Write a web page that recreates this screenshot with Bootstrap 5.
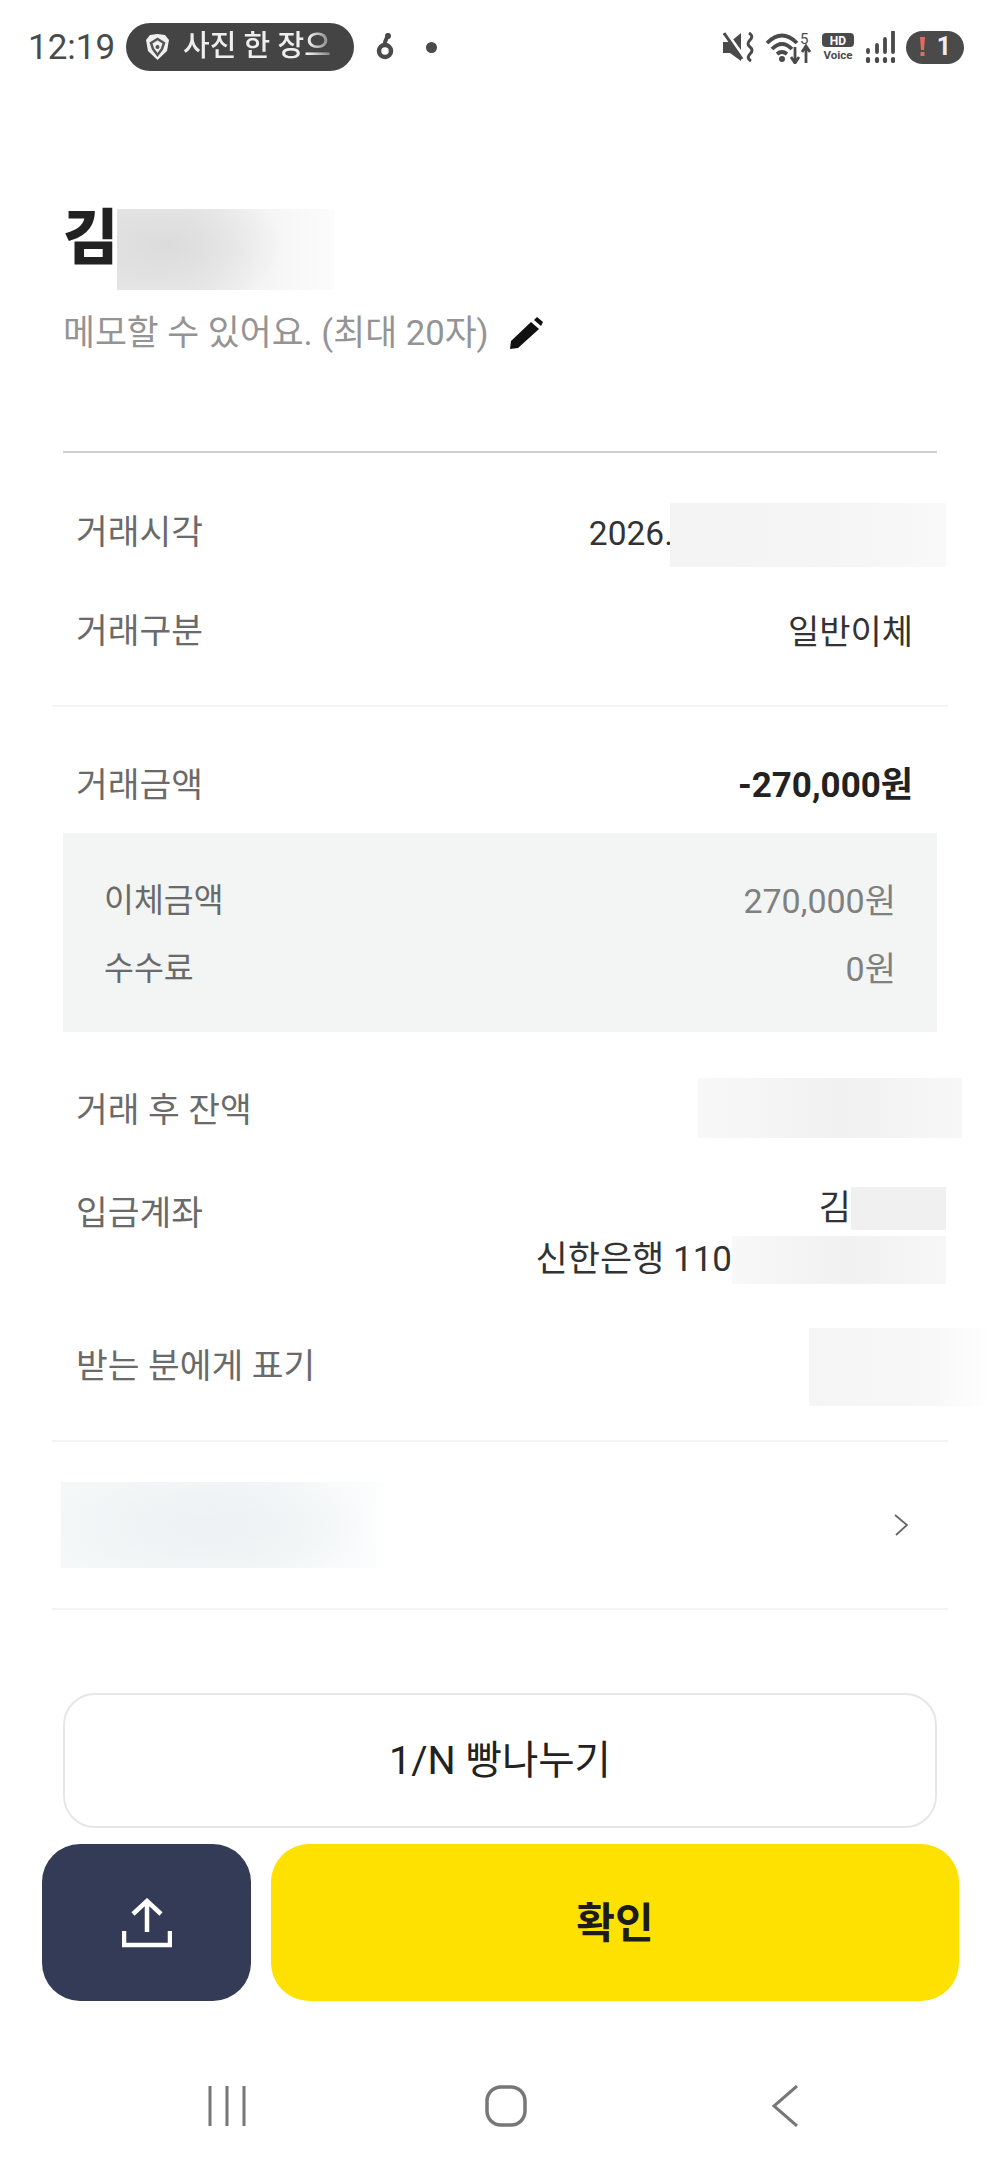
<!DOCTYPE html>
<html lang="ko"><head><meta charset="utf-8"><title>거래 상세</title>
<link href="https://cdn.jsdelivr.net/npm/bootstrap@5.3.0/dist/css/bootstrap.min.css" rel="stylesheet">
<style>
html,body{height:2168px;overflow:hidden;background:#fff}
body{font-family:Roboto,"Noto Sans CJK KR",sans-serif;color:#222;letter-spacing:0}
.sbar{height:94px;padding-left:28px;padding-right:36px;color:#4a4a4a}
.clock{font-size:35px;width:98px;line-height:1}
.pill{width:228px;height:48px;border-radius:24px;background:#444;color:#eee;font-size:29px;font-weight:500;padding-left:19px;gap:13px;overflow:hidden;white-space:nowrap}
.pill-txt{-webkit-mask-image:linear-gradient(90deg,#000 85%,rgba(0,0,0,.35));mask-image:linear-gradient(90deg,#000 85%,rgba(0,0,0,.35))}
.sdot{width:11px;height:11px;border-radius:50%;background:#4a4a4a;margin-left:30px}
.ic-note{margin-left:22px}
.sicons{gap:11px}
.one-pill{width:58px;height:33px;border-radius:17px;background:#4a4a4a;color:#eee;font-size:25px;font-weight:700;gap:11px}
.head{padding:115px 63px 0}
.nm{height:81px}
.nm-t{font-size:60px;font-weight:900;line-height:81px;color:#222;height:81px;margin-top:-11px;width:54px}
.blur-name{width:217px;height:81px;background:radial-gradient(ellipse 120px 70px at 22% 45%,#dbdbdb,rgba(219,219,219,0) 100%),linear-gradient(90deg,#e8e8e8,#ececec 40%,#f4f4f4 65%,#fcfcfc 100%)}
.memo{margin-top:20px;height:46px;font-size:34.700px;color:#949494;gap:20px;line-height:46px}
.rule-a{margin:95px 63px 0;border-top:2px solid #cfcfcf}
.ln{border-top:2px solid #f4f4f4;margin:0 52px}
.tr{padding-left:76px;padding-right:87px;font-size:34.500px;line-height:1.2;color:#6a6a6a}
.tv{color:#333;font-size:34px}
.tv-acct{color:#333;font-size:35px}
.h60{height:60px}
.tr-1{margin-top:48px;height:67px}
.tr-1>span{margin-bottom:3px}
.tr-2{margin-top:34px;margin-bottom:43px}
.tr-3{margin-top:49px}
.amt{font-weight:700;color:#222;font-size:35px}
.box{margin:17px 63px 0;height:199px;background:#f3f5f4;padding:43px 41px 0 41px;font-size:32.500px;color:#6a6a6a}
.box-r{height:50px}
.box-r+.box-r{margin-top:18px}
.box-v{color:#808080;font-size:34px}
.bl{background:linear-gradient(90deg,#f8f8f8,#f1f1f1 55%,#f7f7f7);flex:none}
.bl-date{width:276px;height:64px;margin-right:-33px;background:linear-gradient(90deg,#f4f4f4,#f5f5f5 60%,#f9f9f9)}
.date-t{font-size:33.500px;margin-right:-3px}
.bl-bal{width:264px;height:60px;margin-right:-49px}
.tr-5{margin-top:46px}
.tr-5>span{margin-top:5px}
.tr-6{margin-top:49px;height:97px}
.lbl6{line-height:52px}
.acct-l{height:43px;margin-right:-33px}
.acct-l2{height:48px;margin-top:6px;margin-right:-33px}
.bl-n{width:95px;height:43px;background:#f0f0f0}
.bl-a{width:214px;height:48px}
.tr-7{margin-top:44px;height:78px;margin-bottom:34px}
.bl-mark{width:181px;height:78px;margin-right:-77px;background:linear-gradient(90deg,#f5f5f5,#f8f8f8 70%,#fff)}
.tr-8{margin:40px 0;padding:0 92px 0 61px;height:86px}
.bl-link{width:324px;height:86px;background:radial-gradient(ellipse 170px 60px at 45% 50%,#edf1f3,rgba(237,241,243,0) 100%),linear-gradient(90deg,#f5f8f9,#f2f6f7 55%,#f8fafb 85%,#fdfefe)}
.btn-n{display:block;margin:83px 63px 0;width:874px;height:135px;border:2px solid #e6e6e6;border-radius:32px;font-size:39.500px;color:#222;background:#fff}
.bbar{padding:16px 41px 0 42px;gap:20px}
.btn-sh{width:209px;height:157px;border-radius:38px;background:#343b56;border:0;padding:0}
.btn-ok{flex:1;height:157px;border-radius:38px;background:#ffe100;border:0;padding-top:8px;font-size:42px;font-weight:700;color:#1c1c1c}
.nv{margin-top:84px;padding:0 76px 0 87px}
.nv-c{flex:1 1 0}
</style></head><body>
<div class="sbar d-flex align-items-center">
 <span class="clock">12:19</span>
 <div class="pill d-flex align-items-center">
  <svg width="25" height="28" viewBox="0 0 25 28"><path d="M12.500 1 20 2 24 7 22 18 12.500 27 3 18 1 7 5 2Z" fill="#f0f0f0"/><path d="M6 10 12.500 6 19 10 17 16 12.500 22 8 16Z" fill="none" stroke="#555" stroke-width="2.500"/><circle cx="12.500" cy="14" r="2" fill="#555"/></svg>
  <span class="pill-txt">사진 한 장으</span>
 </div>
 <svg class="ic-note" width="20" height="30" viewBox="0 0 20 30"><path d="M12 3 9 10" stroke="#4a4a4a" stroke-width="4" stroke-linecap="round" fill="none"/><circle cx="12" cy="4" r="3" fill="#4a4a4a"/><circle cx="9" cy="19" r="6" fill="none" stroke="#4a4a4a" stroke-width="4.500"/></svg>
 <span class="sdot"></span>
 <div class="sicons d-flex align-items-center ms-auto">
  <svg width="31" height="30" viewBox="0 0 31 30"><path d="M0 10H7L18 1V29L7 21H0Z" fill="#4a4a4a"/><path d="M3 0 24 29" stroke="#fff" stroke-width="3"/><path d="M1 1 19 27" stroke="#4a4a4a" stroke-width="3"/><path d="M26 1Q31 4 27 8T27 15T27 22T28 29" fill="none" stroke="#4a4a4a" stroke-width="3"/></svg>
  <svg width="46" height="34" viewBox="0 0 46 34"><path d="M2 13Q17-2 32 13M7 19Q17 9 27 19M12 24Q17 20 22 24" fill="none" stroke="#4a4a4a" stroke-width="3.800"/><circle cx="17" cy="29" r="3" fill="#4a4a4a"/><text x="35" y="14" font-size="15" font-family="Roboto" fill="#4a4a4a">5</text><path d="M30 17V32M26 27 30 33 34 27M41 33V18M37 22 41 16 45 22" fill="none" stroke="#4a4a4a" stroke-width="2.800"/></svg>
  <svg width="32" height="30" viewBox="0 0 32 30"><rect x="0" y="1" width="32" height="14" rx="4" fill="#4a4a4a"/><text x="16" y="12.500" font-size="12" font-weight="700" text-anchor="middle" font-family="Roboto" fill="#fff">HD</text><text x="16" y="27" font-size="11.500" font-weight="700" text-anchor="middle" font-family="Roboto" fill="#4a4a4a">Voice</text></svg>
  <svg width="30" height="32" viewBox="0 0 30 32"><path d="M3 19V21M12 14V21M20 8V21M28 1V21" stroke="#4a4a4a" stroke-width="3.800" stroke-linecap="round"/><path d="M3 28V30M12 28V30M20 28V30M28 28V30" stroke="#4a4a4a" stroke-width="4.200" stroke-linecap="round"/></svg>
  <span class="one-pill d-flex align-items-center justify-content-center"><svg width="7" height="20" viewBox="0 0 7 20"><path d="M1 0H6L5 13H2Z" fill="#e26a60"/><rect x="1.500" y="15" width="4" height="4" fill="#e26a60"/></svg>1</span>
 </div>
</div>

<div class="head">
 <div class="nm d-flex"><span class="nm-t">김</span><div class="blur-name"></div></div>
 <div class="memo d-flex align-items-center"><span>메모할 수 있어요. (최대 20자)</span>
  <svg width="34" height="33" viewBox="0 0 34 33"><path d="M2 24 22 5 30 12 9 31 1 32Z" fill="#111"/><path d="M25 3 28 0 34 5 32 9Z" fill="#111"/></svg></div>
</div>
<div class="rule-a"></div>

<div class="tr tr-1 d-flex justify-content-between align-items-center"><span>거래시각</span><div class="d-flex align-items-center"><span class="tv date-t">2026.</span><div class="bl bl-date"></div></div></div>
<div class="tr tr-2 h60 d-flex justify-content-between align-items-center"><span>거래구분</span><span class="tv">일반이체</span></div>
<div class="ln"></div>
<div class="tr tr-3 h60 d-flex justify-content-between align-items-center"><span>거래금액</span><span class="amt">-270,000원</span></div>
<div class="box">
 <div class="box-r d-flex justify-content-between align-items-center"><span>이체금액</span><span class="box-v">270,000원</span></div>
 <div class="box-r d-flex justify-content-between align-items-center"><span>수수료</span><span class="box-v">0원</span></div>
</div>
<div class="tr tr-5 h60 d-flex justify-content-between align-items-center"><span>거래 후 잔액</span><div class="bl bl-bal"></div></div>
<div class="tr tr-6 d-flex justify-content-between align-items-start"><span class="lbl6">입금계좌</span>
 <div class="d-flex flex-column align-items-end">
  <div class="acct-l d-flex align-items-center"><span class="tv-acct">김</span><div class="bl-n"></div></div>
  <div class="acct-l2 d-flex align-items-center"><span class="tv-acct">신한은행 110</span><div class="bl bl-a"></div></div>
 </div></div>
<div class="tr tr-7 d-flex justify-content-between align-items-center"><span>받는 분에게 표기</span><div class="bl-mark"></div></div>
<div class="ln"></div>
<div class="tr-8 d-flex justify-content-between align-items-center"><div class="bl-link"></div>
 <svg width="14" height="22" viewBox="0 0 14 22"><path d="M1 1 13 11 2 21" fill="none" stroke="#666" stroke-width="1.800"/></svg></div>
<div class="ln"></div>
<button type="button" class="btn btn-n">1/N 빵나누기</button>
<div class="bbar d-flex">
 <button type="button" class="btn btn-sh d-flex align-items-center justify-content-center" aria-label="공유">
  <svg width="50" height="50" viewBox="0 0 50 50"><path d="M25 34V3M11 16 25 3 39 16" fill="none" stroke="#fff" stroke-width="4.500"/><path d="M2 33V47H48V33" fill="none" stroke="#fff" stroke-width="4.500"/></svg></button>
 <button type="button" class="btn btn-ok">확인</button>
</div>
<div class="nv d-flex">
 <div class="nv-c d-flex justify-content-center"><svg width="38" height="42" viewBox="0 0 38 42"><path d="M2 1V41M19 1V41M36 1V41" stroke="#777" stroke-width="3"/></svg></div>
 <div class="nv-c d-flex justify-content-center"><svg width="42" height="42" viewBox="0 0 42 42"><rect x="2" y="2" width="38" height="38" rx="14" fill="none" stroke="#777" stroke-width="3.500"/></svg></div>
 <div class="nv-c d-flex justify-content-center"><svg width="26" height="42" viewBox="0 0 26 42"><path d="M25 1 2 21 25 41" fill="none" stroke="#777" stroke-width="3"/></svg></div>
</div>
<script src="https://cdn.jsdelivr.net/npm/bootstrap@5.3.0/dist/js/bootstrap.bundle.min.js"></script>
</body></html>
